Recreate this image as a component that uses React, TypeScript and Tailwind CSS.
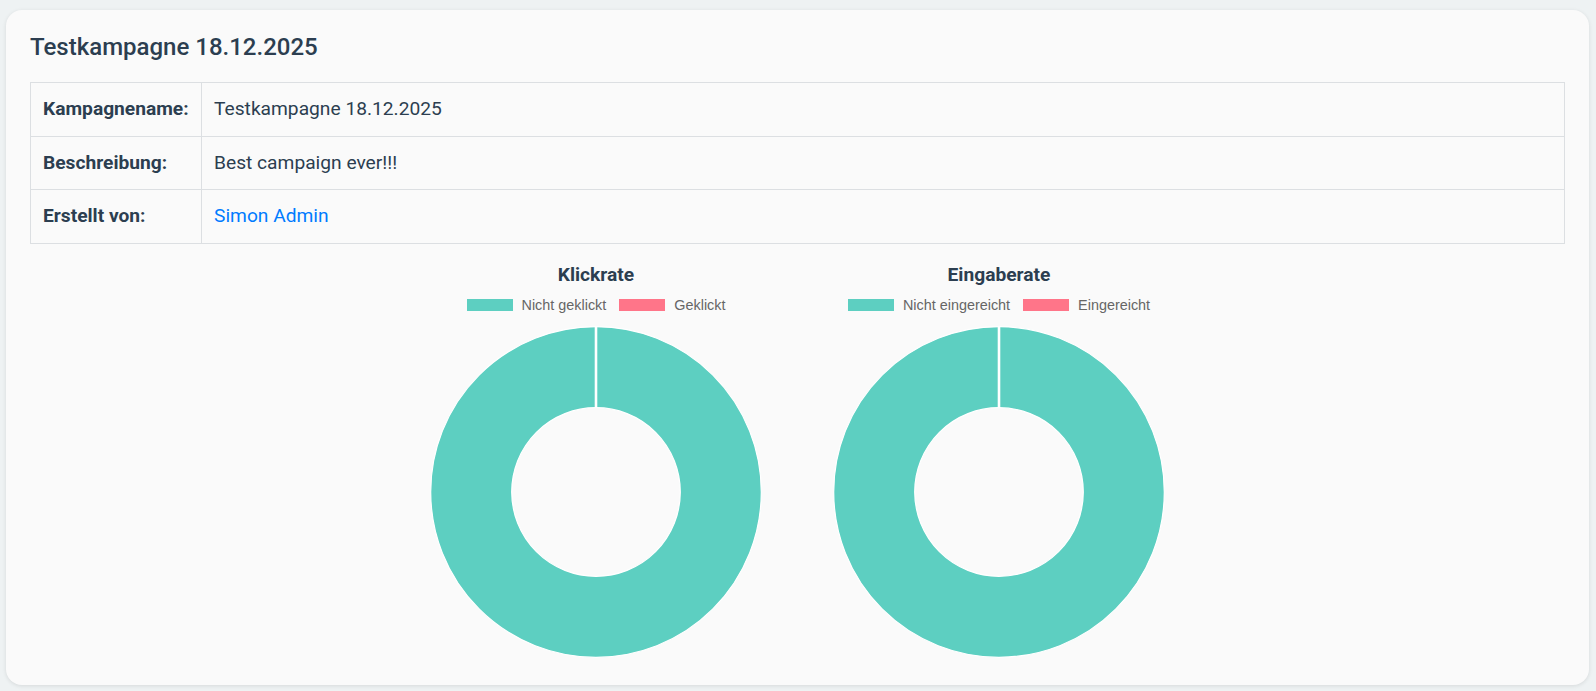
import React from "react";

interface ChartProps {
  title: string;
  labels: [string, string];
  values: [number, number];
}

const TEAL = "#5dcfc1";
const PINK = "#ff7589";

function Donut({ values }: { values: [number, number] }) {
  const size = 332;
  const c = size / 2;
  const outer = 165.3;
  const inner = 84.3;
  const r = (outer + inner) / 2;
  const w = outer - inner;
  const total = values[0] + values[1];
  const circ = 2 * Math.PI * r;
  const pinkLen = total ? (values[1] / total) * circ : 0;

  return (
    <svg width={size} height={size} viewBox={`0 0 ${size} ${size}`}>
      <circle cx={c} cy={c} r={r} fill="none" stroke={TEAL} strokeWidth={w} />
      {pinkLen > 0 && (
        <circle
          cx={c}
          cy={c}
          r={r}
          fill="none"
          stroke={PINK}
          strokeWidth={w}
          strokeDasharray={`${pinkLen} ${circ}`}
          transform={`rotate(-90 ${c} ${c})`}
        />
      )}
      <circle cx={c} cy={c} r={outer} fill="none" stroke="#ffffff" strokeWidth={1.2} />
      <circle cx={c} cy={c} r={inner} fill="none" stroke="#ffffff" strokeWidth={1.2} />
      <line x1={c} y1={c - outer} x2={c} y2={c - inner} stroke="#ffffff" strokeWidth={2.6} />
    </svg>
  );
}

function ChartBlock({ title, labels, values }: ChartProps) {
  return (
    <div className="w-[403px] flex flex-col items-center">
      <h3 className="text-[19.2px] leading-[24px] font-bold text-[#2c3e50]">{title}</h3>
      <div
        className="mt-[10px] flex items-center h-[16px] text-[14.4px] leading-[16px] text-[#666666]"
        style={{ fontFamily: '"Liberation Sans", Arial, sans-serif' }}
      >
        <span className="w-[46px] h-[12px] bg-[#5dcfc1] mr-[9px]" />
        <span>{labels[0]}</span>
        <span className="w-[46px] h-[12px] bg-[#ff7589] ml-[13px] mr-[9px]" />
        <span>{labels[1]}</span>
      </div>
      <div className="mt-[13px]">
        <Donut values={values} />
      </div>
    </div>
  );
}

export default function App() {
  const rows = [
    { label: "Kampagnename:", value: "Testkampagne 18.12.2025" },
    { label: "Beschreibung:", value: "Best campaign ever!!!" },
    { label: "Erstellt von:", value: "Simon Admin", link: true },
  ];

  return (
    <div
      className="min-h-screen bg-[#eef2f3] pt-[10px] pl-[6px] pr-[7px]"
      style={{ fontFamily: 'Roboto, "Liberation Sans", sans-serif' }}
    >
      <div className="h-[675px] bg-[#fafafa] rounded-[16px] shadow-[0_1px_4px_rgba(0,0,0,0.1)] px-6 pt-[23px]">
        {/* Header */}
        <h2 className="text-[24px] leading-[28.8px] font-medium text-[#2c3e50] mb-[20px]">
          Testkampagne 18.12.2025
        </h2>

        {/* Details */}
        <table className="w-full table-fixed border-collapse text-[19.2px] leading-[28.8px] text-[#2c3e50]">
          <colgroup>
            <col className="w-[171px]" />
            <col />
          </colgroup>
          <tbody>
            {rows.map((row) => (
              <tr key={row.label}>
                <td className="border border-[#dcdfe2] px-3 py-3 font-bold">{row.label}</td>
                <td className="border border-[#dcdfe2] px-3 py-3">
                  {row.link ? (
                    <a href="#" className="text-[#007bff]">
                      {row.value}
                    </a>
                  ) : (
                    row.value
                  )}
                </td>
              </tr>
            ))}
          </tbody>
        </table>

        {/* Charts */}
        <div className="flex justify-center mt-[19px]">
          <ChartBlock title="Klickrate" labels={["Nicht geklickt", "Geklickt"]} values={[1, 0]} />
          <ChartBlock title="Eingaberate" labels={["Nicht eingereicht", "Eingereicht"]} values={[1, 0]} />
        </div>
      </div>
    </div>
  );
}
